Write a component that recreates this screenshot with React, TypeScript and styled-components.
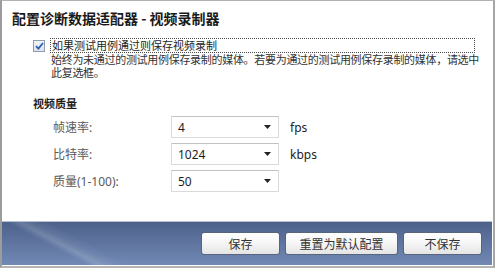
import React from 'react';
import styled, { createGlobalStyle } from 'styled-components';

const GlobalStyle = createGlobalStyle`
  html, body {
    margin: 0;
    padding: 0;
    background: #ffffff;
  }
  body {
    font-family: "Noto Sans", "Noto Sans CJK SC", sans-serif;
  }
`;

const Window = styled.div`
  box-sizing: border-box;
  width: 495px;
  height: 268px;
  display: flex;
  flex-direction: column;
  background: #ffffff;
  border-top: 1px solid #b2b2b2;
  border-left: 2px solid #9c9c9c;
  border-right: 2px solid #a6a6a6;
  border-bottom: 2px solid #b4b4b4;
`;

const Body = styled.div`
  height: 220px;
  padding: 8px 0 0 10px;
  box-sizing: border-box;
`;

const Title = styled.h1`
  margin: 0;
  font-family: "Noto Sans CJK SC", sans-serif;
  font-size: 14px;
  line-height: 18px;
  font-weight: 700;
  color: #1a1a1a;
`;

const CheckGroup = styled.div`
  margin: 11px 0 0 21px;
`;

const CheckRow = styled.div`
  display: flex;
  align-items: center;
  gap: 5px;
`;

const Box = styled.span`
  box-sizing: border-box;
  width: 12px;
  height: 12px;
  border: 1px solid #8f9cae;
  background: linear-gradient(#f2f4f7, #dfe3ea);
  display: flex;
  align-items: center;
  justify-content: center;
  flex: none;
`;

const Focus = styled.label`
  box-sizing: border-box;
  width: 425px;
  height: 15px;
  border: 1px dotted #4a4a4a;
  padding-left: 1px;
  font-family: "Noto Sans CJK SC", sans-serif;
  font-size: 11px;
  line-height: 13px;
  color: #262626;
`;

const Description = styled.p`
  margin: 0 0 0 18px;
  font-family: "Noto Sans CJK SC", sans-serif;
  font-size: 11px;
  line-height: 13px;
  letter-spacing: -0.3px;
  color: #333333;
  white-space: nowrap;
`;

const Section = styled.h2`
  margin: 17px 0 0 21px;
  font-family: "Noto Sans CJK SC", sans-serif;
  font-size: 11px;
  line-height: 14px;
  font-weight: 700;
  color: #1f1f1f;
`;

const Fields = styled.div`
  display: grid;
  grid-template-columns: 107px 108px auto;
  column-gap: 11px;
  row-gap: 5px;
  align-items: center;
  margin: 6px 0 0 41px;
`;

const Label = styled.span`
  font-size: 12px;
  color: #5a5a5a;
`;

const Select = styled.div`
  box-sizing: border-box;
  height: 22px;
  display: flex;
  align-items: center;
  justify-content: space-between;
  padding: 0 7px 0 6px;
  border: 1px solid #dadada;
  border-top-color: #c2c2c2;
  background: #ffffff;
  font-size: 12px;
  color: #1e1e1e;
`;

const Unit = styled.span`
  font-size: 12px;
  color: #222222;
`;

const Footer = styled.div`
  height: 44px;
  margin: 0 1px 1px 0;
  box-sizing: border-box;
  border-top: 1px solid #b7c0d0;
  display: flex;
  justify-content: flex-end;
  align-items: flex-start;
  gap: 5px;
  padding: 10px 10px 0 0;
  background:
    linear-gradient(28deg, transparent 40px, rgba(255, 255, 255, 0.16) 46px, rgba(255, 255, 255, 0.06) 52px, transparent 60px),
    linear-gradient(#4d618a, #7189b5);
`;

const Button = styled.button<{ $w: number }>`
  box-sizing: border-box;
  width: ${(p) => p.$w}px;
  height: 23px;
  border: 1px solid #56647c;
  border-radius: 3px;
  background: linear-gradient(#ffffff 0%, #f7f7f7 45%, #e4e4e4 100%);
  font-family: "Noto Sans CJK SC", sans-serif;
  font-size: 12px;
  color: #333333;
  padding: 0;
  cursor: pointer;
`;

const Caret = () => (
  <svg width="7" height="4" viewBox="0 0 7 4">
    <path d="M0 0h7L3.5 4z" fill="#222" />
  </svg>
);

const fields = [
  { label: '帧速率:', value: '4', unit: 'fps' },
  { label: '比特率:', value: '1024', unit: 'kbps' },
  { label: '质量(1-100):', value: '50', unit: '' },
];

export default function App() {
  return (
    <>
      <GlobalStyle />
      <Window>
        <Body>
          <Title>配置诊断数据适配器 - 视频录制器</Title>
          <CheckGroup>
            <CheckRow>
              <Box>
                <svg width="9" height="8" viewBox="0 0 9 8">
                  <path d="M1 4.2 3.4 6.6 8 1" fill="none" stroke="#2c5fb8" strokeWidth="1.8" />
                </svg>
              </Box>
              <Focus>如果测试用例通过则保存视频录制</Focus>
            </CheckRow>
            <Description>
              始终为未通过的测试用例保存录制的媒体。若要为通过的测试用例保存录制的媒体，请选中
              <br />
              此复选框。
            </Description>
          </CheckGroup>
          <Section>视频质量</Section>
          <Fields>
            {fields.map((f) => (
              <React.Fragment key={f.label}>
                <Label>{f.label}</Label>
                <Select>
                  <span>{f.value}</span>
                  <Caret />
                </Select>
                <Unit>{f.unit}</Unit>
              </React.Fragment>
            ))}
          </Fields>
        </Body>
        <Footer>
          <Button $w={79}>保存</Button>
          <Button $w={113}>重置为默认配置</Button>
          <Button $w={79}>不保存</Button>
        </Footer>
      </Window>
    </>
  );
}
